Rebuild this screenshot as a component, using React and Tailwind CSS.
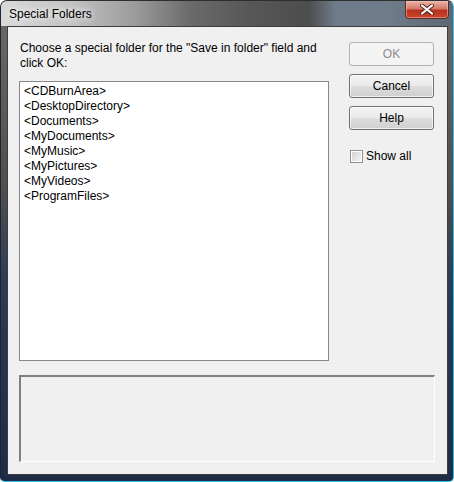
import React from 'react'

const folders = [
  '<CDBurnArea>',
  '<DesktopDirectory>',
  '<Documents>',
  '<MyDocuments>',
  '<MyMusic>',
  '<MyPictures>',
  '<MyVideos>',
  '<ProgramFiles>',
]

function DlgButton({ children, disabled }) {
  return (
    <button
      type="button"
      disabled={disabled}
      className={`w-[85px] h-[24px] rounded-[3px] border text-[12px] leading-none flex items-center justify-center ${
        disabled
          ? 'border-[#adb2b5] bg-[#f4f4f4] text-[#8a8a8a]'
          : 'border-[#707070] text-black bg-[linear-gradient(to_bottom,#f2f2f2_0%,#ebebeb_48%,#dddddd_52%,#cfcfcf_100%)] shadow-[inset_0_0_0_1px_rgba(255,255,255,0.7)]'
      }`}
    >
      {children}
    </button>
  )
}

function CloseGlyph() {
  return (
    <svg width="14" height="11" viewBox="0 0 14 11">
      <path d="M2 1.5 L12 9.5 M12 1.5 L2 9.5" stroke="#5a2020" strokeWidth="4" strokeLinecap="round" />
      <path d="M2 1.5 L12 9.5 M12 1.5 L2 9.5" stroke="#ffffff" strokeWidth="2.2" strokeLinecap="round" />
    </svg>
  )
}

export default function App() {
  return (
    <div className="w-[454px] h-[482px] bg-white font-['Liberation_Sans',Arial,sans-serif]">
      <div className="relative w-[454px] h-[482px] rounded-t-[7px] rounded-b-[5px] border border-t-[#2e2e2e] border-l-[#1b2637] border-r-[#2cc2ef] border-b-[#2cc2ef] overflow-hidden bg-[linear-gradient(to_bottom,#6b6b6b_0%,#4e4e4e_40%,#2b3a55_60%,#1f2c45_100%)]">
        {/* Title bar */}
        <div className="h-[25px] flex items-center pl-[8px] bg-[linear-gradient(to_right,#d9d9d9_0%,#c4c4c4_15%,#9a9a9a_30%,#6a6a6a_42%,#575757_55%,#4d4d4d_68%,#6f7b88_74%,#707c89_85%,#5d6874_100%)]">
          <span className="text-[12px] text-black [text-shadow:0_0_6px_rgba(255,255,255,0.95),0_0_10px_rgba(255,255,255,0.8)]">Special Folders</span>
        </div>
        <div className="absolute top-[-1px] right-[4px] w-[44px] h-[19px] rounded-b-[4px] border border-[#5b2a24] flex items-center justify-center bg-[linear-gradient(to_bottom,#e8b4a8_0%,#d47a68_45%,#b8321e_55%,#c9442c_100%)] shadow-[inset_0_0_0_1px_rgba(255,200,190,0.5)]">
          <CloseGlyph />
        </div>

        {/* Client area */}
        <div className="ml-[6px] w-[441px] h-[449px] border border-[#3d3d3d] bg-[#f0f0f0] flex flex-col pl-[11px] pt-[15px]">
          <div className="flex">
            <div className="w-[310px] flex flex-col">
              <p className="-mt-[1px] h-[30px] text-[12px] leading-[15px] text-black pl-[1px]">
                Choose a special folder for the "Save in folder" field and click OK:
              </p>
              <div className="mt-[10px] h-[280px] bg-white border border-[#828790] pl-[4px] pt-[2px]">
                {folders.map(f => (
                  <div key={f} className="text-[12px] leading-[15px] text-black">{f}</div>
                ))}
              </div>
            </div>
            <div className="ml-[20px] w-[85px] flex flex-col">
              <DlgButton disabled>OK</DlgButton>
              <div className="mt-[8px]"><DlgButton>Cancel</DlgButton></div>
              <div className="mt-[8px]"><DlgButton>Help</DlgButton></div>
              <label className="mt-[20px] ml-[1px] h-[13px] flex items-center gap-[3px] text-[12px] leading-[13px] text-black">
                <span className="w-[13px] h-[13px] border border-[#8f8f8f] bg-white p-[1px]">
                  <span className="block w-full h-full bg-[linear-gradient(135deg,#d2d2d2_0%,#f4f4f4_100%)]"></span>
                </span>
                Show all
              </label>
            </div>
          </div>
          <div className="mt-[14px] w-[416px] h-[87px] border-t-2 border-l-2 border-r border-b border-t-[#808080] border-l-[#808080] border-r-white border-b-white bg-[#f0f0f0]"></div>
        </div>
      </div>
    </div>
  )
}
